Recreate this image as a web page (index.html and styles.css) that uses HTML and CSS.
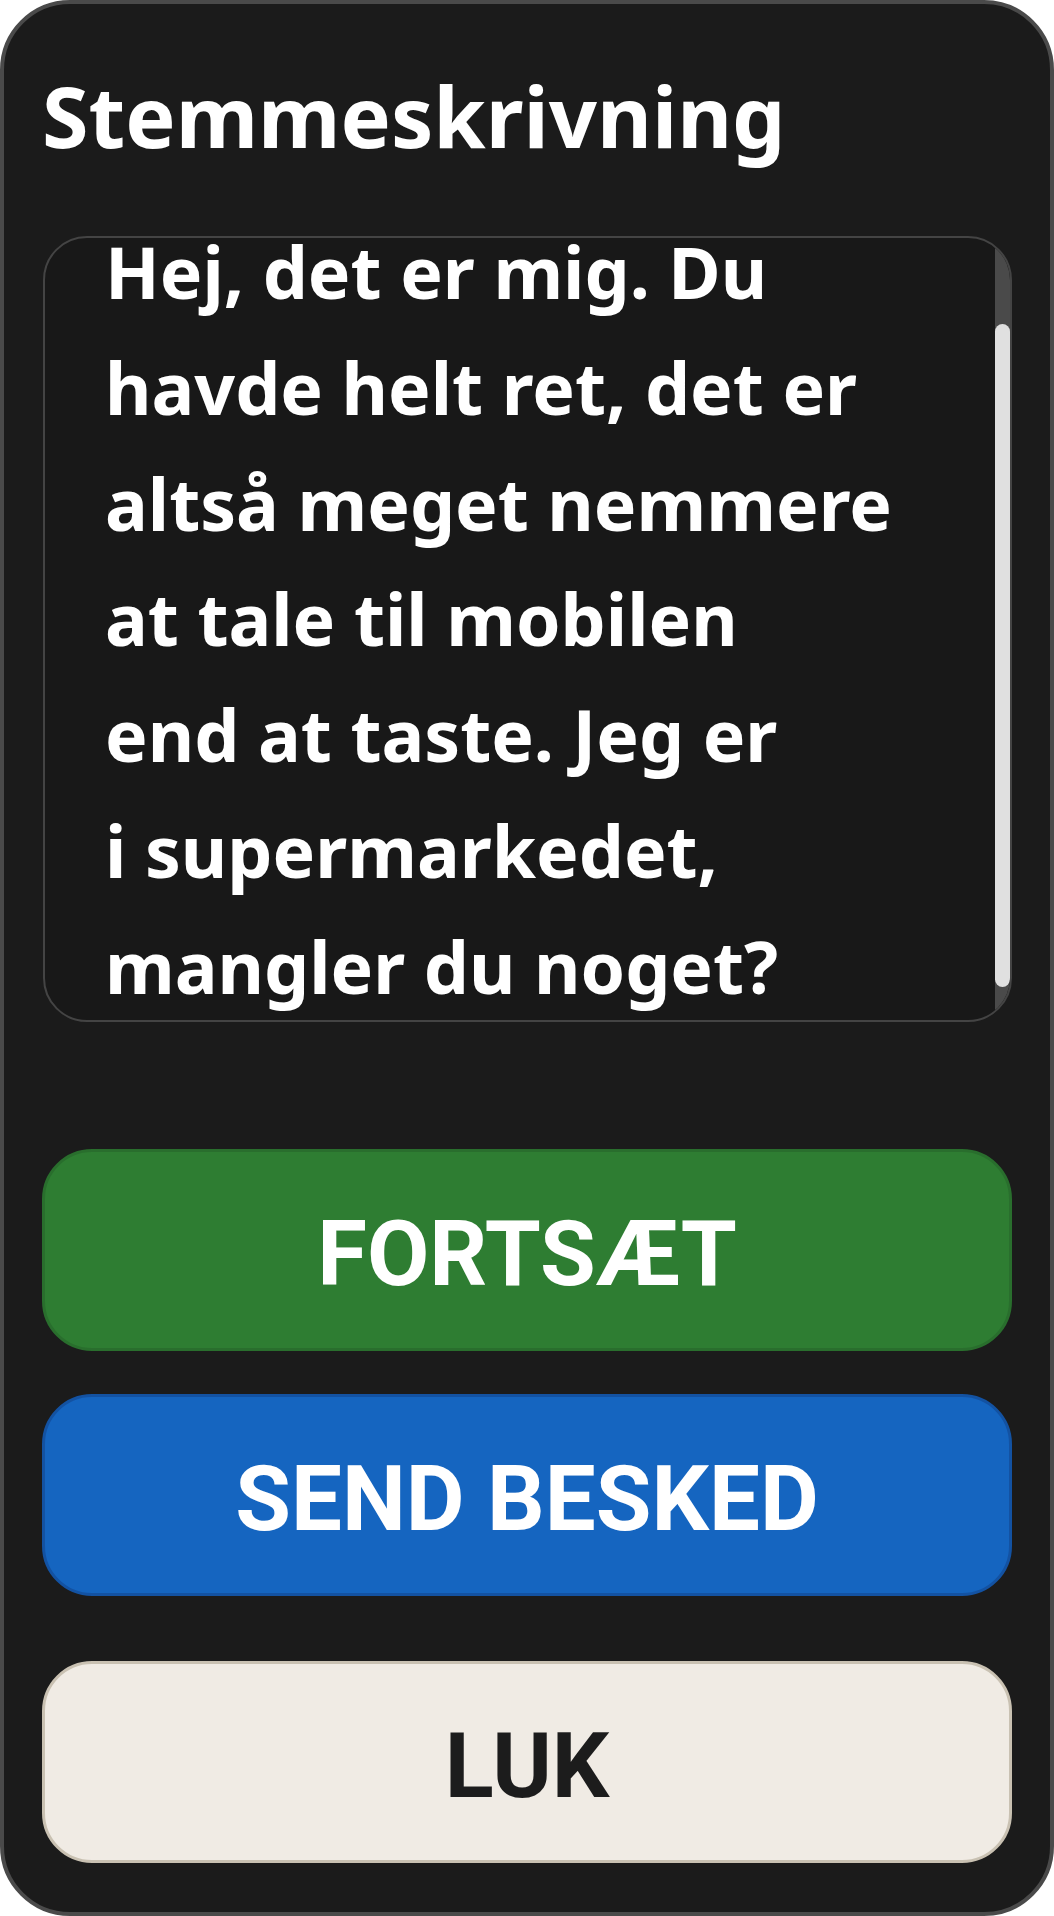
FILE: index.html
```html
<!DOCTYPE html>
<html lang="da">
<head>
<meta charset="utf-8">
<title>Stemmeskrivning</title>
<link rel="stylesheet" href="styles.css">
</head>
<body>
<div class="card">
  <h1 class="title">Stemmeskrivning</h1>
  <div class="transcript">
    <div class="transcript-view">
      <p class="transcript-text">Hej, det er mig. Du<br>havde helt ret, det er<br>altså meget nemmere<br>at tale til mobilen<br>end at taste. Jeg er<br>i supermarkedet,<br>mangler du noget?</p>
    </div>
    <div class="scrollbar"><div class="scrollbar-thumb"></div></div>
  </div>
  <div class="actions">
    <button class="btn btn-continue">FORTSÆT</button>
    <button class="btn btn-send">SEND BESKED</button>
    <button class="btn btn-close">LUK</button>
  </div>
</div>
</body>
</html>
```
FILE: styles.css
```css
html, body {
  margin: 0;
  padding: 0;
  background: #ffffff;
}

.card {
  box-sizing: border-box;
  width: 1054px;
  height: 1916px;
  background: #1b1b1b;
  border: 4px solid #4a4a4a;
  border-radius: 70px;
  padding: 54px 38px 0 38px;
  display: flex;
  flex-direction: column;
}

.title {
  margin: 0;
  font-family: "Noto Sans", "Open Sans", sans-serif;
  font-weight: 700;
  font-size: 84.5px;
  line-height: normal;
  color: #ffffff;
}

.transcript {
  box-sizing: border-box;
  margin-top: 63px;
  margin-left: 1px;
  height: 786px;
  border: 2px solid #444444;
  border-radius: 44px;
  background: #181818;
  overflow: hidden;
  display: flex;
}

.transcript-view {
  flex: 1;
  overflow: hidden;
  padding-left: 60px;
}

.transcript-text {
  margin: -24px 0 0 0;
  font-family: "Noto Sans", "Open Sans", sans-serif;
  font-weight: 700;
  font-size: 71.5px;
  line-height: 115.8px;
  color: #ffffff;
  white-space: nowrap;
}

.scrollbar {
  width: 15px;
  background: #4a4a4a;
  display: flex;
  flex-direction: column;
}

.scrollbar-thumb {
  margin-top: 86px;
  height: 663px;
  background: #e0e0e0;
  border-radius: 8px;
}

.actions {
  display: flex;
  flex-direction: column;
  margin-top: 127px;
}

.btn {
  box-sizing: border-box;
  height: 202px;
  width: 100%;
  border-radius: 50px;
  border: 3px solid transparent;
  font-family: Roboto, "Liberation Sans", sans-serif;
  font-weight: 700;
  font-size: 90.5px;
  color: #ffffff;
  display: flex;
  align-items: center;
  justify-content: center;
  padding: 8px 0 0 0;
}

.btn-continue {
  background: #2e7d32;
  border-color: #296e2d;
}

.btn-send {
  margin-top: 43px;
  background: #1565c0;
  border-color: #1352a2;
}

.btn-close {
  margin-top: 65px;
  background: #f0ebe4;
  border-color: #c9c1b2;
  color: #1c1c1c;
}
```
